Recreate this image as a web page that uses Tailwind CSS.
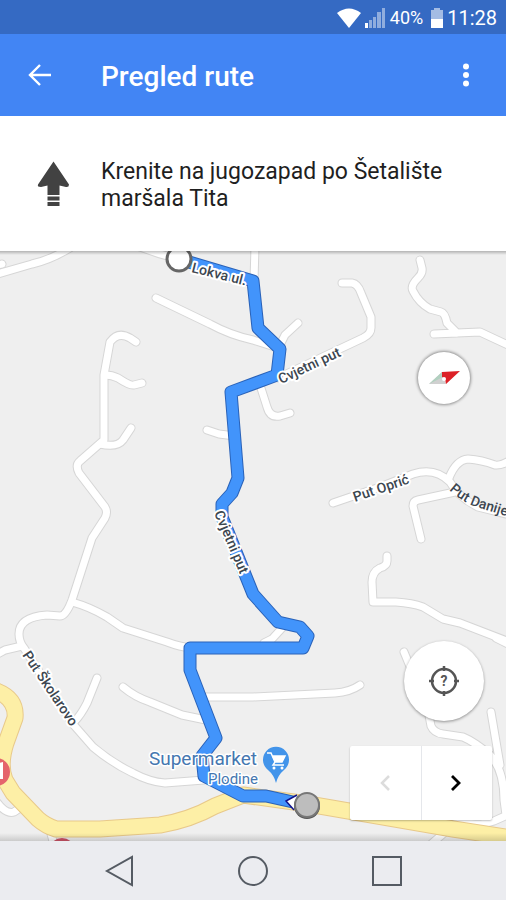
<!DOCTYPE html>
<html lang="hr">
<head>
  <meta charset="UTF-8">
  <meta name="viewport" content="width=device-width, initial-scale=1.0">
  <title>Pregled rute</title>
  <script src="https://cdn.jsdelivr.net/npm/@tailwindcss/browser@4"></script>
</head>
<body class="flex min-h-screen flex-col bg-[#efefef] font-[Roboto,sans-serif] text-[#1f1f1f]">

  <!-- Status bar -->
  <div class="flex h-[34px] items-center justify-end bg-[#356ac3] pt-px pr-[9px] text-white">
    <svg class="mr-1 h-5 w-6" viewBox="0 0 24 20" fill="currentColor" aria-hidden="true">
      <path d="M0 5Q12-4 24 5L12 20z"/>
    </svg>
    <svg class="mr-px h-5 w-5" viewBox="0 0 20 20" fill="currentColor" aria-hidden="true">
      <path d="M0 15h3v5H0z"/>
      <path opacity=".45" d="M4 12h3v8H4zM8 9h3v11H8zM12 4h4v16h-4zM17 0h3v20h-3z"/>
    </svg>
    <span class="mx-1 text-[18px] leading-5">40%</span>
    <svg class="mx-1 h-5 w-3" viewBox="0 0 12 20" fill="currentColor" aria-hidden="true">
      <path opacity=".55" d="M3 0h6v2h3v9H0V2h3z"/>
      <path d="M0 11h12v9H0z"/>
    </svg>
    <span class="text-[20px] leading-5">11:28</span>
  </div>

  <!-- App bar -->
  <header class="flex h-[82px] items-center bg-[#4285f4] pr-6 pl-7 text-white">
    <button class="w-[73px]" aria-label="Natrag">
      <svg class="h-6 w-6" viewBox="0 0 24 24" fill="none" stroke="currentColor" stroke-width="2.4">
        <path d="M23 12H2M12 2L2 12l10 10"/>
      </svg>
    </button>
    <h1 class="flex-1 pt-[3px] text-[28px] leading-8 font-medium">Pregled rute</h1>
    <button aria-label="Više opcija">
      <svg class="h-6 w-8" viewBox="0 0 32 24" fill="currentColor">
        <circle cx="16" cy="3.500" r="3"/><circle cx="16" cy="12" r="3"/><circle cx="16" cy="20.500" r="3"/>
      </svg>
    </button>
  </header>

  <!-- Current step -->
  <section class="flex h-[135px] items-center bg-white pr-6 pl-[37px]">
    <svg class="mr-8 h-12 w-8 shrink-0" viewBox="0 0 32 48" fill="#424242" aria-hidden="true">
      <path d="M16.500 1.500L32 24.500q0 3-3 2.500l-6.500-1.500V35H10.500v-9.500L4 27q-4 0-3-2.500zM10.500 36.500h12v4h-12zM10.500 42h12v4h-12z"/>
    </svg>
    <p class="pt-[3px] text-[23px] leading-[27px]">Krenite na jugozapad po Šetalište maršala Tita</p>
  </section>

  <!-- Map -->
  <main class="relative flex-1 overflow-hidden">
    <svg class="absolute inset-0 h-full w-full" viewBox="0 251 506 590" preserveAspectRatio="xMidYMid slice" role="img" aria-label="Karta rute">
      <defs>
        <g id="roads" fill="none" stroke-linecap="round" stroke-linejoin="round">
          <path d="M-6 266L2 264M-6 275L32 264Q50 260 70 248M140 247L160 254L178 259M255 247L254 280"/>
          <path d="M156 298L210 324Q230 335 253 340L278 348"/>
          <path d="M136 342L130 338Q118 331 110 342L104 375V440L80 461Q75 465 79 473L105 507Q108 512 105 518L92 538L72 600Q66 616 60 616L47 615Q19 617 19 634Q19 642 24 648L72 723L93 747Q112 763 133 773Q150 782 165 783L204 780"/>
          <path d="M105 375Q112 375 118 378Q130 386 134 385L142 383M100 444Q117 448 123 440L131 428"/>
          <path d="M72 602Q90 607 107 617L123 628L167 642Q180 647 192 648M-6 656L5 650L22 646"/>
          <path d="M97 678L87 703Q81 715 74 722M123 687Q135 697 150 702L182 715L206 720M206 697H253L335 693Q350 692 360 685"/>
          <path d="M-6 798Q5 815 14 812L26 804M50 830L54 845"/>
          <path d="M342 283H352Q358 284 361 293L371 317V328Q371 334 363 338L278 378M298 323L285 335L280 345"/>
          <path d="M260 385L267 407Q270 418 280 416L290 413M207 430L219 434L235 436"/>
          <path d="M420 260L422 268Q423 273 418 278Q410 286 413 291Q419 303 430 309L441 312Q445 313 447 323L457 333M434 334L480 332L510 346"/>
          <path d="M333 503L380 487L413 474Q435 467 450 482Q458 497 478 507L510 515M449 478Q456 460 468 459Q482 460 495 465Q502 466 512 459M455 492L418 500Q413 501 413 506L421 539"/>
          <path d="M387 556V561Q387 566 380 568Q372 572 372 582L373 602H396Q412 603 423 607L443 619L460 623L512 643"/>
          <path d="M404 652L428 710L431 726Q434 733 443 734L463 737Q475 742 490 755Q504 770 504 800L506 815M491 712L500 765M430 845L457 822Q480 826 494 821L512 813"/>
          <path d="M283 627L272 639L264 643M496 638L510 645"/>
        </g>
        <path id="highway" fill="none" stroke-linejoin="round" d="M-6 690Q17 698 15 718L6 743Q-1 765 5 780L13 793L38 819Q46 826 56 829H100L160 825Q190 820 215 806L243 795L308 804L453 829L512 838"/>
        <path id="route" fill="none" stroke-linejoin="round" d="M179 259L253 281L258 328L280 349L277 375L231 392L238 478L232 493L222 504V517L253 594L278 622L300 627L308 636L303 648H190V670L216 738L202 756L204 776L243 796L266 796L302 804"/>
        <path id="danijela" d="M449 490Q464 504 483 509L560 532"/>
      </defs>

      <rect x="-500" y="-500" width="1600" height="2400" fill="#efefef"/>
      <use href="#roads" stroke="#d6d6d6" stroke-width="9"/>
      <use href="#roads" stroke="#fff" stroke-width="7"/>
      <use href="#highway" stroke="#e8c98a" stroke-width="17"/>
      <use href="#highway" stroke="#fdefa6" stroke-width="15"/>
      <use href="#route" stroke="#2a62b8" stroke-width="13"/>
      <use href="#route" stroke="#4294fb" stroke-width="11"/>

      <!-- Street names -->
      <g class="text-[14px] font-medium [paint-order:stroke]" fill="#3c4650" stroke="#fff" stroke-width="4" stroke-linejoin="round">
        <text transform="translate(191 272) rotate(14)">Lokva ul.</text>
        <text transform="translate(281 384) rotate(-25)">Cvjetni put</text>
        <text transform="translate(214 513) rotate(67)">Cvjetni put</text>
        <text transform="translate(355 502) rotate(-19)">Put Oprić</text>
        <text transform="translate(22 655) rotate(56)">Put Školarovo</text>
        <!-- on a curve each letter's halo covers the one before, so this one goes without -->
        <text stroke="none"><textPath href="#danijela">Put Danije</textPath></text>
      </g>

      <!-- Supermarket -->
      <g class="[paint-order:stroke]" fill="#4577b0" stroke="#fff" stroke-width="3" stroke-linejoin="round" text-anchor="end">
        <text class="text-[19px]" x="257" y="765">Supermarket</text>
        <text class="text-[15px]" x="258" y="784">Plodine</text>
      </g>
      <path d="M276 783Q274 775 268 770A13 13 0 1 1 284 770Q278 775 276 783z" fill="#4294ea"/>
      <path d="M267 753h4l4 9h7l3-6h-13M275 762l-2 3h11" fill="none" stroke="#fff" stroke-width="1.500"/>
      <path d="M272 756h13l-3 6h-7z" fill="#fff"/>
      <circle cx="274" cy="768" r="1.500" fill="#fff"/><circle cx="282" cy="768" r="1.500" fill="#fff"/>

      <!-- Places cut off by the map edge -->
      <circle cx="-4" cy="772" r="14" fill="#e5646c"/>
      <path d="M-4 764L3 762V779H-4z" fill="#fff"/>
      <circle cx="62" cy="851" r="13" fill="#cf5468"/>

      <!-- Start and step markers -->
      <circle cx="179" cy="259" r="12" fill="#fff" stroke="#666" stroke-width="3"/>
      <path d="M297 795L286 801L294 810" fill="#fff" stroke="#11118a" stroke-width="1.500"/>
      <circle cx="307" cy="806" r="13" fill="#555"/>
      <circle cx="307" cy="805" r="12" fill="#bdbdbd" stroke="#777" stroke-width="2"/>
    </svg>

    <div class="absolute inset-x-0 top-0 h-1 bg-linear-to-b from-black/25 to-transparent"></div>
    <div class="absolute inset-x-0 bottom-0 h-2 bg-linear-to-t from-black/15 to-transparent"></div>

    <button class="absolute top-[101px] right-9 h-[52px] w-[52px] rounded-full bg-white shadow-[0_0_3px_1px_rgba(0,0,0,0.4)]" aria-label="Kompas">
      <svg class="h-full w-full" viewBox="0 0 52 52">
        <path d="M11 32L24 20L28 32z" fill="#d0d0d0"/>
        <path d="M11 32L24 20L25 25z" fill="#b2d0c0"/>
        <path d="M24 20L42 19L28 32L27 27L24 25z" fill="#dc2127"/>
        <circle cx="26" cy="27" r="2" fill="#fff"/>
      </svg>
    </button>

    <button class="absolute right-[22px] bottom-[120px] h-20 w-20 rounded-full bg-white shadow-[0_1px_3px_rgba(0,0,0,0.4)]" aria-label="Moja lokacija">
      <svg class="h-full w-full" viewBox="0 0 80 80" fill="none" stroke="#555" stroke-width="2.500">
        <circle cx="40" cy="40" r="12"/>
        <path d="M40 25v5M40 50v5M25 40h5M50 40h5"/>
        <text class="text-[14px] font-bold" x="40" y="45" text-anchor="middle" fill="#555" stroke="none">?</text>
      </svg>
    </button>

    <div class="absolute right-[14px] bottom-[21px] flex h-[74px] w-[142px] divide-x divide-gray-200 rounded-xs bg-white shadow-[0_1px_2px_rgba(0,0,0,0.25)]">
      <button class="flex flex-1 items-center justify-center text-[#dcdcdc]" aria-label="Prethodni korak" disabled>
        <svg class="h-4 w-4" viewBox="0 0 16 16" fill="none" stroke="currentColor" stroke-width="2.500"><path d="M12 1L5 8l7 7"/></svg>
      </button>
      <button class="flex flex-1 items-center justify-center text-black" aria-label="Sljedeći korak">
        <svg class="h-4 w-4" viewBox="0 0 16 16" fill="none" stroke="currentColor" stroke-width="2.800"><path d="M3 1l7 7-7 7"/></svg>
      </button>
    </div>
  </main>

  <!-- System navigation -->
  <nav class="flex h-[59px] items-center justify-center gap-[102px] bg-[#ebecf0] text-[#555b63]">
    <button aria-label="Natrag">
      <svg class="h-8 w-8" viewBox="0 0 32 32" fill="none" stroke="currentColor" stroke-width="2"><path d="M29 2v28L4 16z"/></svg>
    </button>
    <button aria-label="Početni zaslon">
      <svg class="h-8 w-8" viewBox="0 0 32 32" fill="none" stroke="currentColor" stroke-width="2"><circle cx="16" cy="16" r="14"/></svg>
    </button>
    <button aria-label="Nedavne aplikacije">
      <svg class="h-8 w-8" viewBox="0 0 32 32" fill="none" stroke="currentColor" stroke-width="2"><path d="M2 2h28v28H2z"/></svg>
    </button>
  </nav>

</body>
</html>
